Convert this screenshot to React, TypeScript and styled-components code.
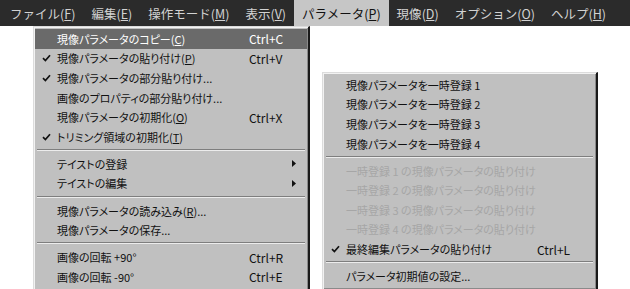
import React from 'react';
import styled, { createGlobalStyle } from 'styled-components';

const GlobalStyle = createGlobalStyle`
  html, body {
    margin: 0;
    padding: 0;
    background: #ffffff;
    overflow: hidden;
  }
  body {
    font-family: "Noto Sans CJK JP", "Noto Sans", sans-serif;
    font-size: 11px;
    font-feature-settings: "palt";
  }
`;

const Page = styled.div`
  position: relative;
  width: 630px;
  height: 289px;
`;

const MenuBar = styled.div`
  display: flex;
  align-items: stretch;
  height: 26px;
  padding-left: 2px;
  background: #2b2b2b;
  font-size: 12.5px;
  font-feature-settings: normal;
`;

const BarItem = styled.div<{ open?: boolean }>`
  display: flex;
  align-items: center;
  padding: 0 8px;
  color: ${p => (p.open ? '#111111' : '#d2d2d2')};
  background: ${p => (p.open ? '#c6c6c6' : 'transparent')};
  white-space: nowrap;
`;

const MenuPanel = styled.div<{ left: number; top: number; width: number; open?: boolean }>`
  position: absolute;
  left: ${p => p.left}px;
  top: ${p => p.top}px;
  width: ${p => p.width}px;
  box-sizing: border-box;
  display: flex;
  flex-direction: column;
  padding: 2px 1px ${p => (p.open ? '12px' : '3px')} 1px;
  background: #c0c0c0;
  border-top: 1px solid #dcdcdc;
  border-left: 1px solid #dcdcdc;
  border-right: 2px solid #1a1a1a;
  border-bottom: 2px solid #1a1a1a;
  box-shadow: inset 1px 1px 0 #f2f2f2, inset -1px -1px 0 #8a8a8a;
  color: #111111;
`;

const Row = styled.div<{ active?: boolean; disabled?: boolean }>`
  display: flex;
  align-items: center;
  height: 19.6px;
  white-space: nowrap;
  background: ${p => (p.active ? '#6a6a6a' : 'transparent')};
  color: ${p => (p.active ? '#ffffff' : p.disabled ? '#a6a6a6' : '#111111')};
`;

const CheckCell = styled.div`
  width: 22px;
  flex: none;
  display: flex;
  justify-content: center;
  align-items: center;
`;

const Label = styled.div`
  flex: 1;
`;

const Trail = styled.div`
  width: 58px;
  flex: none;
  display: flex;
  align-items: center;
  justify-content: space-between;
  padding-right: 11px;
  box-sizing: border-box;
  font-size: 12px;
`;

const Separator = styled.div`
  height: 1px;
  margin: 2.5px 2px 3px 2px;
  background: #7e7e7e;
  border-bottom: 1px solid #ececec;
`;

const Check = () => (
  <svg width="9" height="8" viewBox="0 0 9 8">
    <path d="M1 4.2 L3.4 6.6 L8 1.2" fill="none" stroke="#111" strokeWidth="1.7" />
  </svg>
);

const Arrow = () => (
  <svg width="4" height="7" viewBox="0 0 4 7">
    <path d="M0 0 L4 3.5 L0 7 Z" fill="#111" />
  </svg>
);

type Item =
  | { sep: true }
  | {
      sep?: false;
      label: React.ReactNode;
      shortcut?: string;
      checked?: boolean;
      sub?: boolean;
      active?: boolean;
      disabled?: boolean;
    };

const Mn = ({ k }: { k: string }) => (
  <>
    (<u>{k}</u>)
  </>
);

const mainItems: Item[] = [
  { label: <>現像パラメータのコピー<Mn k="C" /></>, shortcut: 'Ctrl+C', active: true },
  { label: <>現像パラメータの貼り付け<Mn k="P" /></>, shortcut: 'Ctrl+V', checked: true },
  { label: '現像パラメータの部分貼り付け...', checked: true },
  { label: '画像のプロパティの部分貼り付け...' },
  { label: <>現像パラメータの初期化<Mn k="O" /></>, shortcut: 'Ctrl+X' },
  { label: <>トリミング領域の初期化<Mn k="T" /></>, checked: true },
  { sep: true },
  { label: 'テイストの登録', sub: true },
  { label: 'テイストの編集', sub: true },
  { sep: true },
  { label: <>現像パラメータの読み込み<Mn k="R" />...</> },
  { label: '現像パラメータの保存...' },
  { sep: true },
  { label: '画像の回転 +90°', shortcut: 'Ctrl+R' },
  { label: '画像の回転 -90°', shortcut: 'Ctrl+E' },
  { sep: true },
];

const subItems: Item[] = [
  { label: '現像パラメータを一時登録 1' },
  { label: '現像パラメータを一時登録 2' },
  { label: '現像パラメータを一時登録 3' },
  { label: '現像パラメータを一時登録 4' },
  { sep: true },
  { label: '一時登録 1 の現像パラメータの貼り付け', disabled: true },
  { label: '一時登録 2 の現像パラメータの貼り付け', disabled: true },
  { label: '一時登録 3 の現像パラメータの貼り付け', disabled: true },
  { label: '一時登録 4 の現像パラメータの貼り付け', disabled: true },
  { label: '最終編集パラメータの貼り付け', shortcut: 'Ctrl+L', checked: true },
  { sep: true },
  { label: 'パラメータ初期値の設定...' },
];

const MenuList = ({ items }: { items: Item[] }) => (
  <>
    {items.map((it, i) =>
      it.sep ? (
        <Separator key={i} />
      ) : (
        <Row key={i} active={it.active} disabled={it.disabled}>
          <CheckCell>{it.checked && <Check />}</CheckCell>
          <Label>{it.label}</Label>
          <Trail>
            <span>{it.shortcut}</span>
            {it.sub && <Arrow />}
          </Trail>
        </Row>
      )
    )}
  </>
);

const bar = [
  { t: 'ファイル', k: 'F' },
  { t: '編集', k: 'E' },
  { t: '操作モード', k: 'M' },
  { t: '表示', k: 'V' },
  { t: 'パラメータ', k: 'P', open: true },
  { t: '現像', k: 'D' },
  { t: 'オプション', k: 'O' },
  { t: 'ヘルプ', k: 'H' },
];

export default function App() {
  return (
    <Page>
      <GlobalStyle />
      <MenuBar>
        {bar.map(b => (
          <BarItem key={b.k} open={b.open}>
            {b.t}
            <Mn k={b.k} />
          </BarItem>
        ))}
      </MenuBar>
      <MenuPanel left={33} top={26} width={277} open>
        <MenuList items={mainItems} />
      </MenuPanel>
      <MenuPanel left={322} top={72} width={276}>
        <MenuList items={subItems} />
      </MenuPanel>
    </Page>
  );
}
